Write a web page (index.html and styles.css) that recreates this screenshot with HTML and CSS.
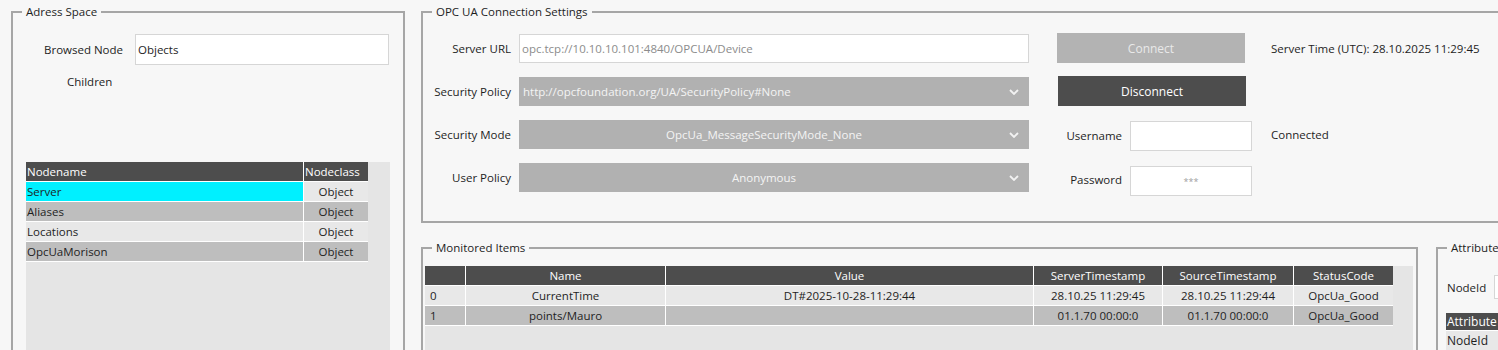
FILE: index.html
```html
<!DOCTYPE html>
<html lang="en">
<head>
    <meta charset="UTF-8">
    <title>OPC UA Client</title>
    <link rel="stylesheet" href="styles.css">
</head>
<body>
    <div class="app">
        <!-- Adress Space -->
        <fieldset class="group group-address">
            <legend>Adress Space</legend>
            <div class="browse-row">
                <label class="browse-label" for="browsedNode">Browsed Node</label>
                <input class="text-input browse-input" id="browsedNode" type="text" value="Objects">
            </div>
            <div class="children-label">Children</div>
            <div class="grid-area node-list">
                <table class="grid node-table">
                    <thead>
                        <tr><th class="col-nodename">Nodename</th><th class="col-nodeclass">Nodeclass</th></tr>
                    </thead>
                    <tbody>
                        <tr class="row-light"><td class="selected">Server</td><td class="center">Object</td></tr>
                        <tr class="row-dark"><td>Aliases</td><td class="center">Object</td></tr>
                        <tr class="row-light"><td>Locations</td><td class="center">Object</td></tr>
                        <tr class="row-dark"><td>OpcUaMorison</td><td class="center">Object</td></tr>
                    </tbody>
                </table>
            </div>
        </fieldset>

        <div class="right-column">
            <!-- Connection settings -->
            <fieldset class="group group-connection">
                <legend>OPC UA Connection Settings</legend>
                <div class="settings-grid">
                    <label class="field-label">Server URL</label>
                    <div class="field"><input class="text-input url-input" type="text" value="opc.tcp://10.10.10.101:4840/OPCUA/Device"></div>
                    <div class="side"><button class="btn btn-connect">Connect</button></div>
                    <div class="status">Server Time (UTC): 28.10.2025 11:29:45</div>

                    <label class="field-label">Security Policy</label>
                    <div class="field">
                        <div class="combo">
                            <span class="combo-text">http://opcfoundation.org/UA/SecurityPolicy#None</span>
                            <svg class="chevron" width="10" height="6" viewBox="0 0 10 6"><polyline points="1,1 5,5 9,1" fill="none" stroke="#f2f2f2" stroke-width="1.8"/></svg>
                        </div>
                    </div>
                    <div class="side"><button class="btn btn-disconnect">Disconnect</button></div>
                    <div class="status"></div>

                    <label class="field-label">Security Mode</label>
                    <div class="field">
                        <div class="combo">
                            <span class="combo-text center">OpcUa_MessageSecurityMode_None</span>
                            <svg class="chevron" width="10" height="6" viewBox="0 0 10 6"><polyline points="1,1 5,5 9,1" fill="none" stroke="#f2f2f2" stroke-width="1.8"/></svg>
                        </div>
                    </div>
                    <div class="side credential">
                        <label class="cred-label">Username</label>
                        <input class="text-input cred-input user-input" type="text" value="">
                    </div>
                    <div class="status">Connected</div>

                    <label class="field-label">User Policy</label>
                    <div class="field">
                        <div class="combo">
                            <span class="combo-text center">Anonymous</span>
                            <svg class="chevron" width="10" height="6" viewBox="0 0 10 6"><polyline points="1,1 5,5 9,1" fill="none" stroke="#f2f2f2" stroke-width="1.8"/></svg>
                        </div>
                    </div>
                    <div class="side credential">
                        <label class="cred-label">Password</label>
                        <input class="text-input cred-input pass-input" type="text" value="***">
                    </div>
                    <div class="status"></div>
                </div>
            </fieldset>

            <div class="bottom-row">
                <!-- Monitored Items -->
                <fieldset class="group group-monitored">
                    <legend>Monitored Items</legend>
                    <div class="grid-area monitored-list">
                        <table class="grid monitored-table">
                            <thead>
                                <tr>
                                    <th class="col-idx"></th>
                                    <th class="col-name">Name</th>
                                    <th class="col-value">Value</th>
                                    <th class="col-server">ServerTimestamp</th>
                                    <th class="col-source">SourceTimestamp</th>
                                    <th class="col-status">StatusCode</th>
                                </tr>
                            </thead>
                            <tbody>
                                <tr class="row-light">
                                    <td class="idx">0</td><td>CurrentTime</td><td>DT#2025-10-28-11:29:44</td>
                                    <td>28.10.25 11:29:45</td><td>28.10.25 11:29:44</td><td>OpcUa_Good</td>
                                </tr>
                                <tr class="row-dark">
                                    <td class="idx">1</td><td>points/Mauro</td><td></td>
                                    <td>01.1.70 00:00:0</td><td>01.1.70 00:00:0</td><td>OpcUa_Good</td>
                                </tr>
                            </tbody>
                        </table>
                    </div>
                </fieldset>

                <!-- Attribute -->
                <fieldset class="group group-attribute">
                    <legend>Attribute</legend>
                    <div class="attr-row">
                        <label class="attr-label">NodeId</label>
                        <input class="text-input attr-input" type="text" value="">
                    </div>
                    <table class="grid attr-table">
                        <thead><tr><th>Attribute</th></tr></thead>
                        <tbody><tr class="row-light"><td>NodeId</td></tr></tbody>
                    </table>
                </fieldset>
            </div>
        </div>
    </div>
</body>
</html>
```

FILE: styles.css
```css
/* Basis */
html, body {
    overflow: hidden;
}

body {
    margin: 0;
    background: #f7f7f7;
    font-family: "Open Sans", "Noto Sans", sans-serif;
    font-size: 11.5px;
    color: #1e1e1e;
}

.app {
    display: flex;
    align-items: flex-start;
    gap: 16px;
    padding: 4px 0 0 11px;
}

/* Group boxes */
.group {
    margin: 0;
    padding: 0;
    border: 2px solid #a6a6a6;
    min-width: 0;
    box-sizing: border-box;
    flex-shrink: 0;
}

.group legend {
    margin-left: 9px;
    padding: 0 4px;
    line-height: 16px;
}

.text-input {
    box-sizing: border-box;
    border: 1px solid #d6d6d6;
    background: #ffffff;
    font: inherit;
    color: #1e1e1e;
    padding: 0 2px;
    outline: none;
}

/* Adress Space */
.group-address {
    width: 394px;
    height: 420px;
    padding-top: 14px;
}

.browse-row {
    display: flex;
    align-items: center;
}

.browse-label {
    width: 110px;
    text-align: right;
}

.browse-input {
    margin-left: 12px;
    width: 254px;
    height: 31px;
}

.children-label {
    margin: 9px 0 0 54px;
    line-height: 16px;
}

.grid-area {
    background: #e5e5e5;
}

.node-list {
    margin: 72px 0 0 13px;
    width: 364px;
    height: 220px;
}

/* Tabellen */
.grid {
    border-collapse: separate;
    border-spacing: 0;
    table-layout: fixed;
}

.grid th,
.grid td {
    height: 19px;
    padding: 0 1px;
    border-bottom: 1px solid #ffffff;
    font-weight: normal;
    white-space: nowrap;
    overflow: hidden;
    box-sizing: content-box;
}

.grid th {
    background: #4d4d4d;
    color: #ffffff;
}

.grid th + th,
.grid td + td {
    border-left: 1px solid #ffffff;
}

.row-light td {
    background: #e8e8e8;
}

.row-dark td {
    background: #bebebe;
}

.row-light td.selected {
    background: #00f0ff;
}

.center {
    text-align: center;
}

.node-table {
    width: 342px;
}

.node-table th {
    text-align: left;
}

.node-table .col-nodename {
    width: 275px;
}

.node-table .col-nodeclass {
    width: 62px;
}

/* Connection settings */
.right-column {
    display: flex;
    flex-direction: column;
    width: 1120px;
    flex-shrink: 0;
}

.group-connection {
    padding: 14px 0 29px 0;
}

.settings-grid {
    display: grid;
    grid-template-columns: 88px 546px 214px 1fr;
    grid-auto-rows: 29px;
    row-gap: 14px;
    align-items: center;
}

.field-label {
    text-align: right;
    white-space: nowrap;
}

.field {
    margin-left: 8px;
    width: 510px;
    height: 29px;
}

.url-input {
    width: 100%;
    height: 100%;
    color: #8c8c8c;
}

.combo {
    display: flex;
    align-items: center;
    gap: 4px;
    height: 100%;
    padding: 0 10px 0 4px;
    background: #b1b1b1;
    color: #f4f4f4;
}

.combo-text {
    flex: 1;
}

.chevron {
    flex-shrink: 0;
}

.side {
    align-self: start;
}

.btn {
    display: block;
    width: 188px;
    height: 30px;
    margin-top: -1px;
    border: none;
    font: inherit;
    font-size: 12px;
}

.btn-connect {
    background: #b3b3b3;
    color: #e9e9e9;
}

.btn-disconnect {
    margin-left: 1px;
    background: #4d4d4d;
    color: #ffffff;
}

.credential {
    display: flex;
    align-items: center;
}

.cred-label {
    width: 65px;
    text-align: right;
}

.cred-input {
    margin-left: 8px;
    width: 122px;
    height: 30px;
}

.user-input {
    margin-top: 1px;
}

.pass-input {
    margin-top: 3px;
    text-align: center;
    color: #a0a0a0;
    font-size: 9px;
}

.status {
    white-space: nowrap;
}

/* Untere Reihe */
.bottom-row {
    display: flex;
    align-items: flex-start;
    gap: 18px;
    margin-top: 17px;
}

.group-monitored {
    width: 997px;
    height: 200px;
    padding-top: 10px;
}

.monitored-list {
    margin-left: 2px;
    width: 988px;
    height: 140px;
}

.monitored-table {
    width: 968px;
}

.monitored-table td {
    text-align: center;
}

.monitored-table td.idx {
    text-align: left;
    padding-left: 5px;
}

.col-idx { width: 38px; }
.col-name { width: 197px; }
.col-value { width: 365px; }
.col-server { width: 126px; }
.col-source { width: 128px; }
.col-status { width: 97px; }

.group-attribute {
    width: 200px;
    height: 200px;
    padding-top: 19px;
}

.attr-row {
    display: flex;
    align-items: center;
    height: 24px;
    margin-left: 9px;
}

.attr-label {
    width: 37px;
}

.attr-input {
    margin-left: 10px;
    width: 120px;
    height: 24px;
}

.attr-table {
    margin: 14px 0 0 8px;
    width: 150px;
}

.attr-table th {
    height: 17px;
    text-align: left;
    font-size: 12px;
}

.attr-table td {
    font-size: 12px;
}
```
